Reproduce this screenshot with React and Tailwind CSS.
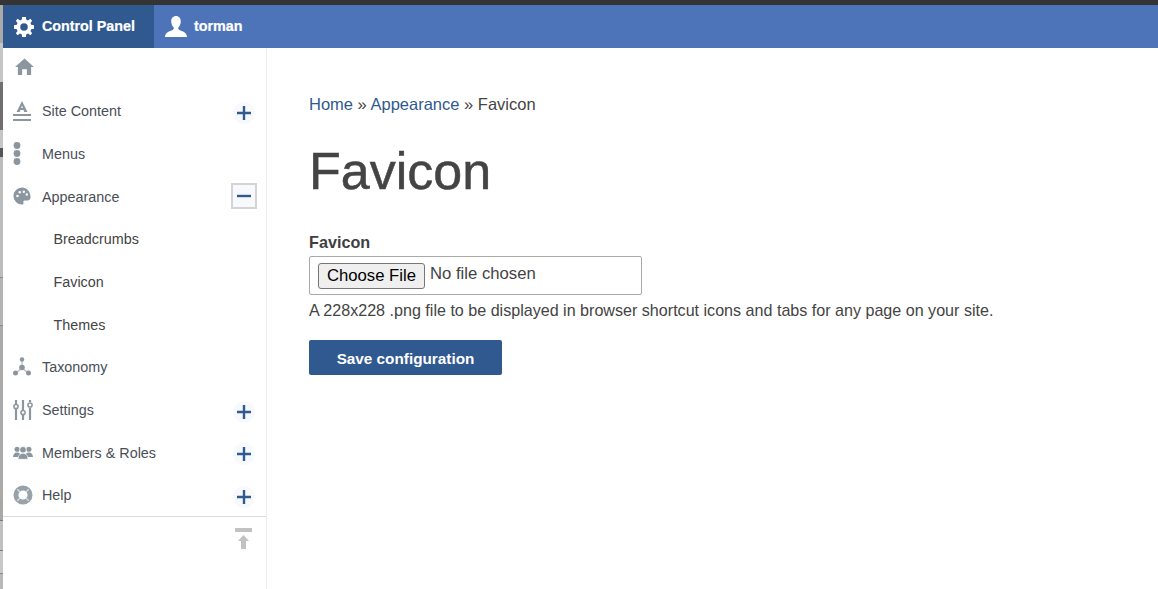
const Plus = () => (
  <div className="w-[22px] h-[22px] rounded-full bg-[#f8f9fc] flex items-center justify-center">
    <svg width="16" height="16" viewBox="0 0 16 16"><path d="M8 1v14M1 8h14" stroke="#2f5a92" strokeWidth="2.4" /></svg>
  </div>
);
const Minus = () => (
  <div className="w-[26px] h-[26px] border-2 border-[#d4d4d4] bg-[#f8f9fc] flex items-center justify-center">
    <svg width="16" height="16" viewBox="0 0 16 16"><path d="M1 8h14" stroke="#2f5a92" strokeWidth="2.4" /></svg>
  </div>
);
const G = "#8b969f";
const HomeI = () => (
  <svg width="19" height="17" viewBox="0 0 20 18"><path d="M10 0.500 L20 9.500 L17 9.500 V18 H12.500 V12 H7.500 V18 H3 V9.500 H0 Z" fill={G} /></svg>
);
const AI = () => (
  <svg width="18" height="21" viewBox="0 0 18 21"><path d="M9 0 L14.500 11 H11.300 L10.500 9 H7.500 L6.700 11 H3.500 Z M8.200 7 H9.800 L9 4.500 Z" fill={G} fillRule="evenodd" /><path d="M0 14h18M0 19h18" stroke={G} strokeWidth="2.200" /></svg>
);
const DotsI = () => (
  <svg width="8" height="23" viewBox="0 0 8 23"><circle cx="4" cy="3.500" r="3.400" fill={G} /><circle cx="4" cy="11.500" r="3.400" fill={G} /><circle cx="4" cy="19.500" r="3.400" fill={G} /></svg>
);
const PaletteI = () => (
  <svg width="18" height="18" viewBox="0 0 20 20"><path fillRule="evenodd" fill={G} d="M10 0.500a9.500 9.500 0 0 0-9.500 9.500 9.500 9.500 0 0 0 9.500 9.500c1.500 0 2-1 1.600-2-.5-1.300 0-2.600 1.600-2.600H16c2.400 0 3.500-1.600 3.500-3.900C19.500 5 15 0.500 10 0.500Z M5 8.500a1.400 1.400 0 1 0 0 2.800 1.400 1.400 0 0 0 0-2.800Z M7.500 4.500a1.400 1.400 0 1 0 0 2.800 1.400 1.400 0 0 0 0-2.800Z M12 3.800a1.400 1.400 0 1 0 0 2.800 1.400 1.400 0 0 0 0-2.800Z M15.300 7a1.400 1.400 0 1 0 0 2.800 1.400 1.400 0 0 0 0-2.800Z" /></svg>
);
const TaxI = () => (
  <svg width="18" height="19" viewBox="0 0 18 19"><path d="M9 3v8M9 11l-6 5M9 11l6 5" stroke="#b5bcc2" strokeWidth="1.200" /><circle cx="9" cy="2.500" r="2.200" fill={G} /><circle cx="9" cy="10.500" r="2.800" fill={G} /><circle cx="2.500" cy="16" r="2.500" fill={G} /><circle cx="15.500" cy="16" r="2.500" fill={G} /></svg>
);
const SlidersI = () => (
  <svg width="20" height="20" viewBox="0 0 20 20" fill="none" stroke={G}><path d="M3 0v4M3 9v11M10 0v10M10 15v5M17 0v2M17 8v12" strokeWidth="2.200" /><circle cx="3" cy="6.500" r="2.100" strokeWidth="1.500" /><circle cx="10" cy="12.500" r="2.100" strokeWidth="1.500" /><circle cx="17" cy="5" r="2.100" strokeWidth="1.500" /></svg>
);
const PeopleI = () => (
  <svg width="22" height="15" viewBox="0 0 22 15" fill={G}><circle cx="4.500" cy="4" r="2.800" /><circle cx="17.500" cy="4" r="2.800" /><path d="M0 12.500c0-3 2-5 4.500-5s4.500 2 4.500 5Z M13 12.500c0-3 2-5 4.500-5s4.500 2 4.500 5Z" /><circle cx="11" cy="4.500" r="3.600" stroke="#fff" strokeWidth=".8" /><path d="M5.500 15c0-4 2.400-6.800 5.500-6.800s5.500 2.800 5.500 6.800Z" stroke="#fff" strokeWidth=".8" /></svg>
);
const HelpI = () => (
  <svg width="20" height="20" viewBox="0 0 21 21" fill="none"><circle cx="10.500" cy="10.500" r="7.400" stroke="#98a2aa" strokeWidth="5.200" /><path d="M4.500 4.500l3 3M16.500 4.500l-3 3M4.500 16.500l3-3M16.500 16.500l-3-3" stroke="#dfe2e4" strokeWidth="1.300" /></svg>
);
const Gear = () => (
  <svg width="20" height="20" viewBox="0 0 24 24" fill="#fff"><path fillRule="evenodd" d="M9.800 0h4.400l.6 3.400 2 .8L19.600 2.200 21.800 4.400l-2 2.800.8 2 3.400.6v4.400l-3.400.6-.8 2 2 2.800-2.200 2.200-2.800-2-2 .8-.6 3.400H9.800l-.6-3.400-2-.8-2.800 2-2.200-2.200 2-2.800-.8-2L0 14.200V9.800l3.400-.6.8-2-2-2.800L4.400 2.200l2.800 2 2-.8L9.800 0Z M12 7.500a4.500 4.500 0 1 0 0 9 4.500 4.500 0 0 0 0-9Z" /></svg>
);
const User = () => (
  <svg width="22" height="21" viewBox="0 0 22 21" fill="#fff"><path d="M11 0c3 0 4.800 2.300 4.800 5.300 0 2.600-1 4.700-2.300 6-.5.500-.5 2 .8 2.600 3 1.200 7.700 2.400 7.700 7.100H0c0-4.700 4.700-5.900 7.700-7.100 1.300-.6 1.300-2.100.8-2.600-1.300-1.300-2.300-3.400-2.300-6C6.200 2.300 8 0 11 0Z" /></svg>
);

const Row = ({ icon, label, ctl, minus }) => (
  <div className="h-[42.670px] flex items-center pl-[10px] pr-[9px]">
    <div className="w-[20px] flex justify-start">{icon}</div>
    <span className="ml-[9px] mt-[2px] text-[14.350px] text-[#4a4f57]">{label}</span>
    <div className={`ml-auto w-[26px] flex justify-center ${minus ? "" : "mt-[4px]"}`}>{ctl}</div>
  </div>
);
const Sub = ({ label }) => (
  <div className="h-[42.670px] flex items-center pl-[50.500px] pt-[2px] text-[14.350px] text-[#444]">{label}</div>
);

export default function App() {
  return (
    <div className="w-[1158px] h-[589px] overflow-hidden bg-white flex flex-col font-['Liberation_Sans',Arial,sans-serif]">
      <div className="h-[5px] bg-[#343434] shrink-0" />
      <div className="flex flex-1 min-h-0">
        <div className="w-[3px] shrink-0 flex flex-col bg-[#b8b8b8]">
          <div className="h-[38px] bg-[#aaaaaa]" />
          <div className="h-[39px] bg-[#c6c6c6]" />
          <div className="h-[48px] bg-[#6f6f6f]" />
          <div className="h-[18px] bg-[#c6c6c6]" />
          <div className="h-[9px] bg-[#555555]" />
          <div className="h-[120px] bg-[#bcbcbc]" />
          <div className="h-[1px] bg-[#8a8a8a]" />
          <div className="h-[47px] bg-[#b4b4b4]" />
          <div className="h-[1px] bg-[#8a8a8a]" />
          <div className="h-[173px] bg-[#aaaaaa]" />
          <div className="h-[21px] bg-[#a6aaa2]" />
          <div className="h-[1px] bg-[#7a7a7a]" />
          <div className="h-[29px] bg-[#c0c0c0]" />
          <div className="h-[1px] bg-[#7a7a7a]" />
          <div className="h-[22px] bg-[#c8c8c8]" />
          <div className="h-[1px] bg-[#8a8a8a]" />
        </div>
        <div className="flex-1 flex flex-col min-w-0">
          <header className="h-[43px] bg-[#4d74b8] flex items-stretch shrink-0 text-white font-bold text-[14.300px] [-webkit-text-stroke:0.2px_#fff]">
            <div className="w-[151px] bg-[#30598f] flex items-center pl-[11px] gap-[8px]"><Gear /><span>Control Panel</span></div>
            <div className="flex items-center pl-[11px] gap-[7px]"><User /><span>torman</span></div>
          </header>
          <div className="flex flex-1 min-h-0">
            <aside className="w-[264px] border-r border-[#ececec] shrink-0 flex flex-col">
              <div className="h-[41.700px] flex items-start pt-[10px] pl-[12px]"><HomeI /></div>
              <Row icon={<AI />} label="Site Content" ctl={<Plus />} />
              <Row icon={<DotsI />} label="Menus" />
              <Row icon={<PaletteI />} label="Appearance" ctl={<Minus />} minus />
              <Sub label="Breadcrumbs" />
              <Sub label="Favicon" />
              <Sub label="Themes" />
              <Row icon={<TaxI />} label="Taxonomy" />
              <Row icon={<SlidersI />} label="Settings" ctl={<Plus />} />
              <Row icon={<PeopleI />} label="Members & Roles" ctl={<Plus />} />
              <Row icon={<HelpI />} label="Help" ctl={<Plus />} />
              <div className="border-t border-[#dcdcdc] flex justify-end pr-[13px] pt-[11px]">
                <svg width="18" height="22" viewBox="0 0 18 22" fill="#c2c2c2"><rect x="0" y="0" width="17" height="4" /><path d="M8.500 7 L14 13 H11 V21 H6 V13 H3 Z" /></svg>
              </div>
            </aside>
            <main className="flex-1 pl-[42px] pt-[47px] text-[#444]">
              <div className="text-[16.500px] leading-[18px] text-[#444]">
                <a className="text-[#30598f]">Home</a> » <a className="text-[#30598f]">Appearance</a> » Favicon
              </div>
              <h1 className="text-[52px] leading-[58px] mt-[29px] text-[#444] font-normal [-webkit-text-stroke:0.5px_#444]">Favicon</h1>
              <label className="block font-bold text-[16.200px] leading-[18px] mt-[33px] text-[#3f3f3f]">Favicon</label>
              <div className="mt-[5px] w-[333px] h-[39px] border border-[#a9a9a9] rounded-[2px] flex items-center pl-[8px] text-[16.700px]">
                <span className="h-[26px] w-[107px] bg-[#efefef] border border-[#767676] rounded-[3px] text-black flex items-center justify-center">Choose File</span>
                <span className="ml-[5px] mb-[3px] text-[#444]">No file chosen</span>
              </div>
              <p className="mt-[5px] text-[16.100px] leading-[20px] text-[#444]">A 228x228 .png file to be displayed in browser shortcut icons and tabs for any page on your site.</p>
              <button className="mt-[20px] w-[193px] h-[35px] pt-[3px] bg-[#30598f] rounded-[2px] text-white font-bold text-[15.300px] flex items-center justify-center">Save configuration</button>
            </main>
          </div>
        </div>
      </div>
    </div>
  );
}
